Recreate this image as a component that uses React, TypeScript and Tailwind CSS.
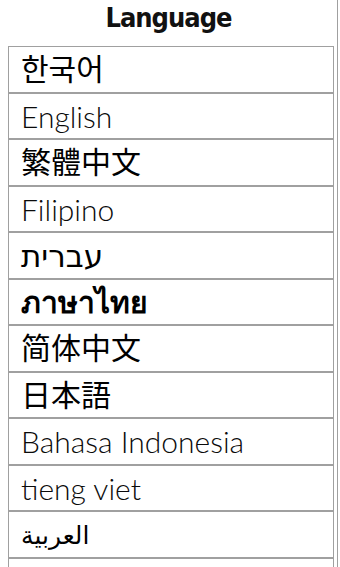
import React from 'react';

type Lang = { label: string; cls: string };

const latin = 'font-light text-[#0a0a0a] text-[30px] [font-family:Lato,"Open_Sans",sans-serif]';
const cjk = 'font-normal text-black text-[30px]';

const languages: Lang[] = [
  { label: '한국어', cls: cjk },
  { label: 'English', cls: latin },
  { label: '繁體中文', cls: cjk },
  { label: 'Filipino', cls: latin },
  { label: 'עברית', cls: 'font-normal text-black text-[31px]' },
  { label: 'ภาษาไทย', cls: 'font-bold text-black text-[30px]' },
  { label: '简体中文', cls: cjk },
  { label: '日本語', cls: cjk },
  { label: 'Bahasa Indonesia', cls: latin },
  { label: 'tieng viet', cls: latin },
  { label: 'العربية', cls: 'font-normal text-black text-[25px]' },
  { label: '', cls: cjk },
];

function LanguageRow({ label, cls }: Lang) {
  return (
    <div className="h-[46.5px] shrink-0 border border-[#a0a0a0] flex items-center pl-[12px] overflow-hidden">
      <span dir="ltr" className={`leading-none whitespace-nowrap ${cls}`} style={{ unicodeBidi: 'plaintext' }}>
        {label}
      </span>
    </div>
  );
}

export default function App() {
  return (
    <div
      className="w-[340px] h-[567px] bg-white overflow-hidden flex"
      style={{ fontFamily: '"Noto Sans", "Noto Sans CJK KR", "Noto Sans CJK JP", "DejaVu Sans", sans-serif' }}
    >
      <div className="w-[337px] flex flex-col">
        <div className="h-[46px] shrink-0 flex justify-center pt-[3px]">
          <h1
            className="text-[27px] font-bold text-[#111] leading-[30px] tracking-[-1px]"
            style={{ fontFamily: '"DejaVu Sans Condensed", "DejaVu Sans", sans-serif' }}
          >
            Language
          </h1>
        </div>
        <div className="ml-[8px] w-[326px] flex flex-col">
          {languages.map((lang, i) => (
            <LanguageRow key={i} {...lang} />
          ))}
        </div>
      </div>
      <div className="w-px h-full bg-[#a0a0a0]" />
    </div>
  );
}
